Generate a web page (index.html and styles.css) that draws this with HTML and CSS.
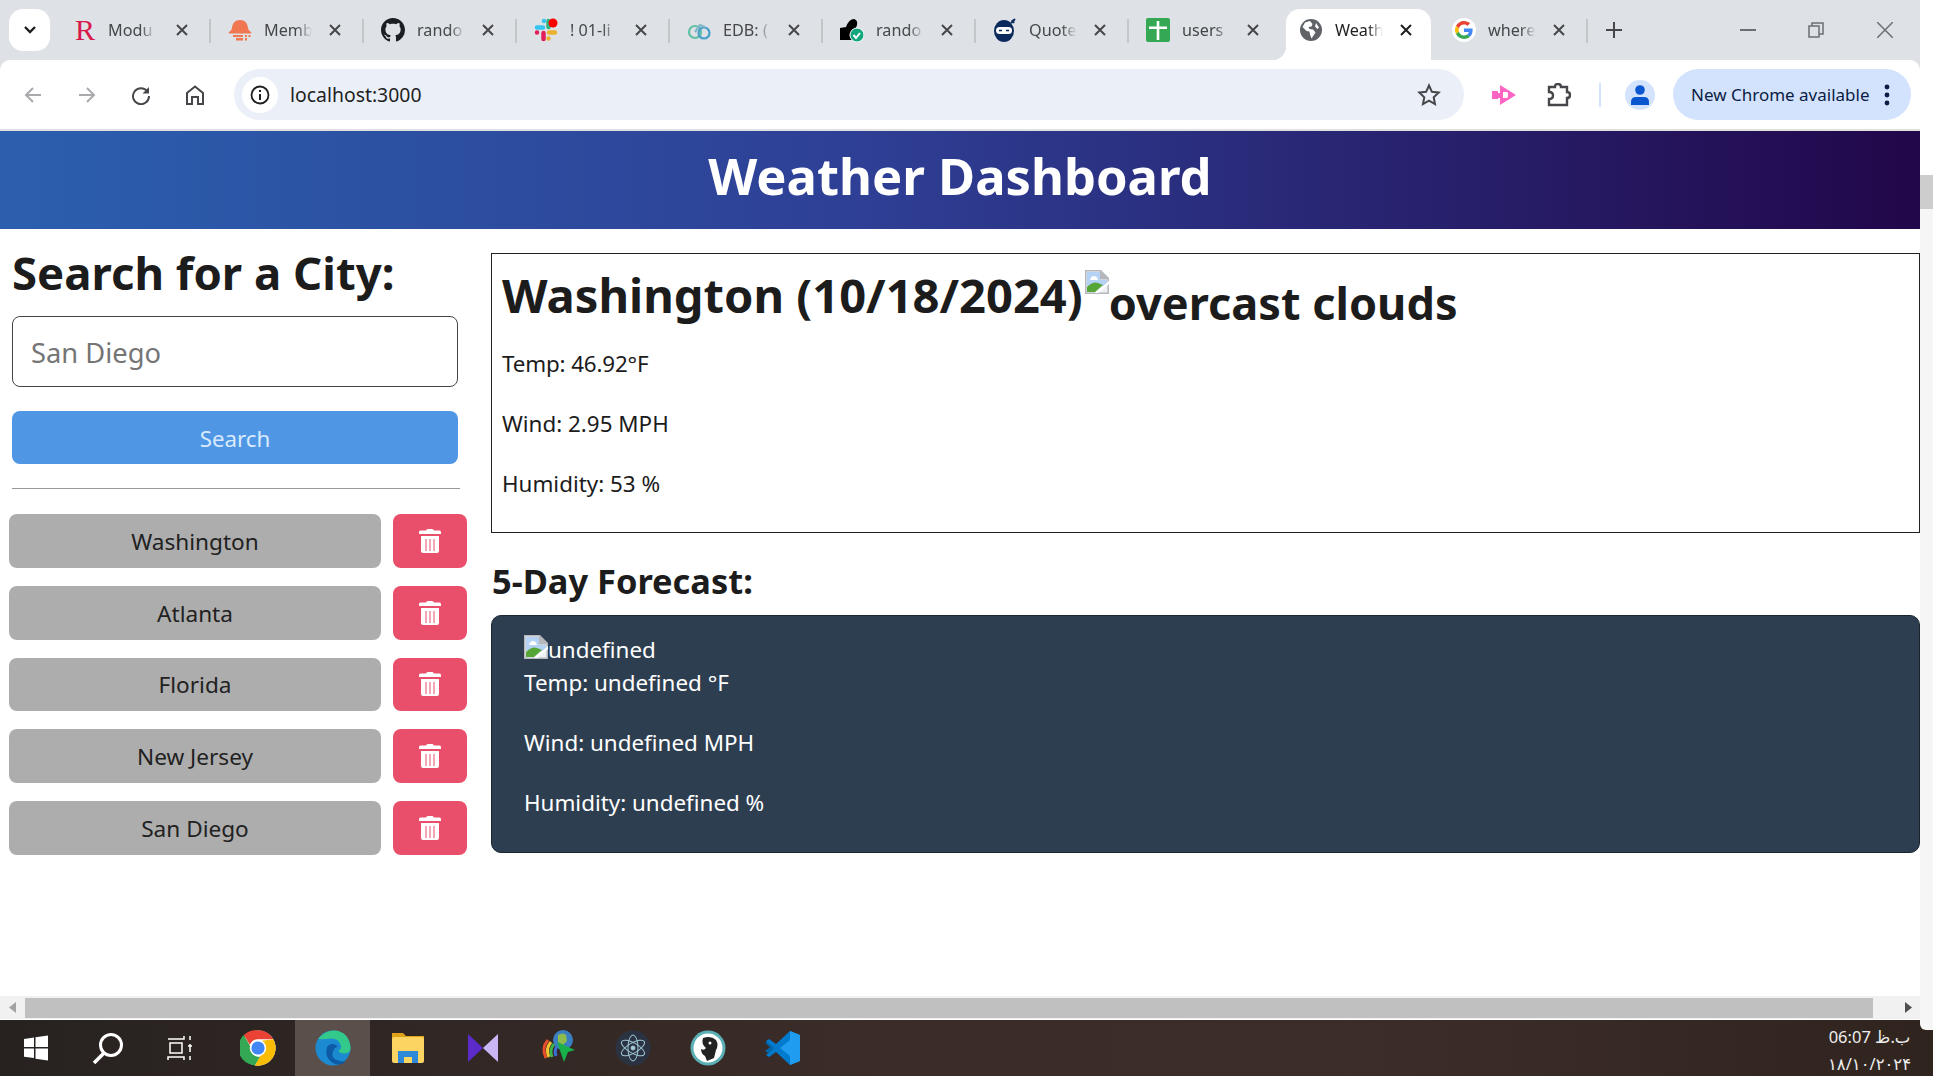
FILE: index.html
```html
<!DOCTYPE html>
<html lang="en">
<head>
  <meta charset="UTF-8">
  <title>Weather Dashboard</title>
  <link rel="stylesheet" href="styles.css">
</head>
<body>

<svg class="sprites" width="0" height="0">
  <symbol id="trash" viewBox="0 0 22 24">
    <path fill="#fff" d="M7 1.5Q7.3 0 9 0h4q1.700 0 2 1.500h5.500q1.500 0 1.500 1.500v2H0V3q0-1.500 1.500-1.500zM2 7h18v15q0 2-2 2H4q-2 0-2-2z"/>
    <path stroke="#e94e6a" stroke-width="1" d="M7 10v12M11 10v12M15 10v12"/>
  </symbol>
  <symbol id="broken" viewBox="0 0 24 24">
    <path fill="#b4b8bd" d="M0 0h16l8 8v16H0z"/>
    <path fill="#eef0f3" d="M1.500 1.500h13.500v8h7.500v13H1.500z"/>
    <path fill="#b5d2f4" d="M2 2h13v8h7v6H2z"/>
    <path fill="#fff" d="M5 10q1-4 4-4t4 4z"/>
    <path fill="#55a636" d="M2 22v-5q6-6 11-4l5 2-8 7z"/>
    <path fill="#fff" d="M10 23l14-12v3L13.500 23z"/>
  </symbol>
  <symbol id="close-x" viewBox="0 0 14 14">
    <path stroke="currentColor" stroke-width="2" d="M2 2l10 10M12 2L2 12"/>
  </symbol>
</svg>

<div class="screen">
  <div class="browser">

    <div class="tabstrip">
      <div class="tab-search">
        <svg width="14" height="10" viewBox="0 0 14 10"><path fill="none" stroke="#1f1f1f" stroke-width="2.400" d="M2 2l5 5 5-5"/></svg>
      </div>

      <div class="tab">
        <span class="fav fav-r">R</span>
        <span class="tab-title">Modu</span>
        <svg class="tab-close"><use href="#close-x"/></svg>
      </div>
      <div class="tab">
        <svg class="fav" viewBox="0 0 24 24"><path fill="#f0774f" d="M12 2c5 0 7.500 3 8 8 .3 2 1.500 3 3 4 .8.600.2 1.500-.8 1.500H1.800c-1 0-1.600-.9-.8-1.500 1.500-1 2.700-2 3-4 .5-5 3-8 8-8z"/><path fill="#f0774f" d="M5 17h10v2H5zM8 20h7v2.500H8zM17 17h2v2h-2zM20.500 17h2v2h-2zM17 20h2v2.500h-2z"/></svg>
        <span class="tab-title">Memb</span>
        <svg class="tab-close"><use href="#close-x"/></svg>
      </div>
      <div class="tab">
        <svg class="fav" viewBox="0 0 16 16"><path fill="#1b1f23" d="M8 0C3.580 0 0 3.580 0 8c0 3.540 2.290 6.530 5.470 7.590.4.070.55-.17.55-.38 0-.19-.01-.82-.01-1.490-2.010.37-2.530-.49-2.690-.94-.09-.23-.48-.94-.82-1.130-.28-.15-.68-.52-.01-.53.63-.01 1.080.58 1.230.82.72 1.210 1.870.87 2.330.66.070-.52.28-.87.51-1.070-1.780-.2-3.640-.89-3.640-3.950 0-.87.31-1.590.82-2.150-.08-.2-.36-1.020.08-2.120 0 0 .67-.21 2.200.82.64-.18 1.320-.27 2-.27.68 0 1.360.09 2 .27 1.530-1.040 2.200-.82 2.200-.82.44 1.100.16 1.920.08 2.120.51.56.82 1.270.82 2.150 0 3.070-1.870 3.750-3.650 3.950.29.25.54.73.54 1.480 0 1.070-.01 1.930-.01 2.200 0 .21.15.46.55.38A8.013 8.013 0 0016 8c0-4.420-3.580-8-8-8z"/></svg>
        <span class="tab-title">rando</span>
        <svg class="tab-close"><use href="#close-x"/></svg>
      </div>
      <div class="tab">
        <svg class="fav" viewBox="0 0 24 24">
          <path stroke="#36c5f0" stroke-width="4.500" stroke-linecap="round" d="M3 9.500h6"/><path stroke="#36c5f0" stroke-width="4.500" stroke-linecap="round" d="M10 3v.1"/>
          <path stroke="#2eb67d" stroke-width="4.500" stroke-linecap="round" d="M14.500 3v6"/>
          <circle cx="19" cy="5" r="4.500" fill="#f00"/>
          <path stroke="#ecb22e" stroke-width="4.500" stroke-linecap="round" d="M15 14.500h6M14.500 20.500v.1"/>
          <path stroke="#e01e5a" stroke-width="4.500" stroke-linecap="round" d="M9.500 15v6M3 14.500v.1"/>
        </svg>
        <span class="tab-title">! 01-li</span>
        <svg class="tab-close"><use href="#close-x"/></svg>
      </div>
      <div class="tab">
        <svg class="fav" viewBox="0 0 24 24" fill="none" stroke-width="2.200"><circle cx="8" cy="14" r="6" stroke="#5fc0a5"/><circle cx="17" cy="15" r="5.500" stroke="#4aa0c8"/><path stroke="#7fb7c9" d="M8 14l5-7 5 2"/></svg>
        <span class="tab-title">EDB: (</span>
        <svg class="tab-close"><use href="#close-x"/></svg>
      </div>
      <div class="tab">
        <svg class="fav" viewBox="0 0 24 24"><path fill="#000" d="M0 10l6-1q3-8 8-8 4 1 3 6l-2 5-3 10H0z"/><circle cx="17" cy="17" r="7" fill="#12a67c" stroke="#fff" stroke-width="1"/><path fill="none" stroke="#fff" stroke-width="2" d="M13.500 17l2.500 3 4-5"/></svg>
        <span class="tab-title">rando</span>
        <svg class="tab-close"><use href="#close-x"/></svg>
      </div>
      <div class="tab">
        <svg class="fav" viewBox="0 0 24 24"><ellipse cx="11" cy="13" rx="10" ry="11" fill="#0d2a5c"/><rect x="3" y="9" width="16" height="7" rx="3.500" fill="#fff"/><path stroke="#0d2a5c" stroke-width="1.500" d="M6 12.500h3M13 12.500h3"/><path stroke="#0d2a5c" stroke-width="2" d="M18 5l4-4M21 5l-2-3"/></svg>
        <span class="tab-title">Quote</span>
        <svg class="tab-close"><use href="#close-x"/></svg>
      </div>
      <div class="tab no-sep">
        <svg class="fav" viewBox="0 0 24 24"><rect width="24" height="24" rx="2" fill="#34a853"/><path fill="#fff" d="M10.700 3h2.600v5.500H21V11h-7.700v11h-2.600V11H3V8.500h7.700z"/></svg>
        <span class="tab-title">users</span>
        <svg class="tab-close"><use href="#close-x"/></svg>
      </div>
      <div class="tab active">
        <svg class="fav" viewBox="0 0 24 24"><circle cx="12" cy="12" r="11" fill="#5f6368"/><path fill="#fff" d="M11 3l-5 1.500L3.500 9l4 4 3 .5.5 3 1.500 4 2-3 2-3-2.500-3-3.500-.5-1-2 3-.5 1-2.500zM17 5l3 4.500-1.500 1.500-2.500-2.500z"/></svg>
        <span class="tab-title">Weath</span>
        <svg class="tab-close"><use href="#close-x"/></svg>
      </div>
      <div class="tab">
        <span class="fav fav-google">
          <svg viewBox="0 0 48 48">
            <path fill="#EA4335" d="M24 9.500c3.540 0 6.710 1.220 9.210 3.600l6.850-6.850C35.900 2.380 30.470 0 24 0 14.620 0 6.510 5.380 2.560 13.220l7.980 6.190C12.430 13.720 17.740 9.500 24 9.500z"/>
            <path fill="#4285F4" d="M46.980 24.550c0-1.570-.15-3.090-.38-4.550H24v9.020h12.940c-.58 2.960-2.260 5.480-4.780 7.180l7.730 6c4.510-4.180 7.090-10.360 7.090-17.650z"/>
            <path fill="#FBBC05" d="M10.530 28.590c-.48-1.450-.76-2.990-.76-4.590s.27-3.140.76-4.590l-7.980-6.190C.92 16.460 0 20.120 0 24c0 3.880.92 7.540 2.560 10.780l7.970-6.190z"/>
            <path fill="#34A853" d="M24 48c6.480 0 11.930-2.130 15.890-5.810l-7.730-6c-2.150 1.450-4.920 2.300-8.160 2.300-6.260 0-11.570-4.220-13.470-9.910l-7.980 6.190C6.510 42.620 14.620 48 24 48z"/>
          </svg>
        </span>
        <span class="tab-title">where</span>
        <svg class="tab-close"><use href="#close-x"/></svg>
      </div>

      <div class="new-tab">
        <svg width="16" height="16" viewBox="0 0 16 16"><path stroke="#45474a" stroke-width="2" d="M8 0v16M0 8h16"/></svg>
      </div>

      <div class="win-controls">
        <div class="win-btn"><svg width="16" height="2" viewBox="0 0 16 2"><path stroke="#6b6e72" stroke-width="2" d="M0 1h16"/></svg></div>
        <div class="win-btn"><svg width="16" height="16" viewBox="0 0 16 16" fill="none" stroke="#6b6e72" stroke-width="1.500"><rect x="1" y="4" width="10" height="11"/><path d="M4 4V1h11v11h-4"/></svg></div>
        <div class="win-btn"><svg width="16" height="16" viewBox="0 0 16 16"><path stroke="#6b6e72" stroke-width="1.500" d="M0 0l16 16M16 0L0 16"/></svg></div>
      </div>
    </div>

    <div class="toolbar">
      <div class="tool-btn"><svg width="18" height="18" viewBox="0 0 18 18" fill="none" stroke="#a8aaad" stroke-width="2"><path d="M17 9H2M9 2L2 9l7 7"/></svg></div>
      <div class="tool-btn"><svg width="18" height="18" viewBox="0 0 18 18" fill="none" stroke="#a8aaad" stroke-width="2"><path d="M1 9h15M9 2l7 7-7 7"/></svg></div>
      <div class="tool-btn"><svg width="20" height="20" viewBox="0 0 20 20" fill="none" stroke="#45474a" stroke-width="2"><path d="M16.500 6.500A8 8 0 1 0 18 11"/><path fill="#45474a" stroke="none" d="M18 2v6.500h-6.500z"/></svg></div>
      <div class="tool-btn"><svg width="20" height="20" viewBox="0 0 20 20" fill="none" stroke="#45474a" stroke-width="2"><path d="M2 19V8l8-6.500L18 8v11h-5v-7H7v7z"/></svg></div>

      <div class="omnibox">
        <span class="site-info">
          <svg width="20" height="20" viewBox="0 0 20 20"><circle cx="10" cy="10" r="8.500" fill="none" stroke="#1f1f1f" stroke-width="1.800"/><path stroke="#1f1f1f" stroke-width="2" d="M10 9v6M10 5v2"/></svg>
        </span>
        <span class="url">localhost:3000</span>
        <svg class="star" width="24" height="24" viewBox="0 0 24 24"><path fill="none" stroke="#45474a" stroke-width="2" d="M12 2.500l2.900 6.300 6.800.8-5 4.700 1.300 6.800-6-3.400-6 3.400 1.300-6.800-5-4.700 6.800-.8z"/></svg>
      </div>

      <div class="tool-btn ext-btn"><svg width="24" height="20" viewBox="0 0 24 20"><path fill="#ff66c4" d="M0 6h6V8H8V0l16 10L8 20v-7H6v1H0zM11 7v6h4l1-1v-4l-1-1z"/></svg></div>
      <div class="tool-btn ext-btn"><svg width="24" height="24" viewBox="0 0 24 24"><path fill="none" stroke="#45474a" stroke-width="2.400" d="M2 4h6q0-3 3-3t3 3h6v5q3 0 3 3t-3 3v7H2v-6q4 0 4-3.500T2 9z"/></svg></div>
      <div class="tool-sep"></div>
      <div class="avatar"><svg width="20" height="20" viewBox="0 0 20 20"><circle cx="10" cy="5" r="4.800" fill="#0b57d0"/><path fill="#0b57d0" d="M1 20v-3q0-5 5-5h8q5 0 5 5v3z"/></svg></div>
      <div class="update-pill">
        <span>New Chrome available</span>
        <svg width="6" height="22" viewBox="0 0 6 22"><circle cx="3" cy="3" r="2.400" fill="#0b1d44"/><circle cx="3" cy="11" r="2.400" fill="#0b1d44"/><circle cx="3" cy="19" r="2.400" fill="#0b1d44"/></svg>
      </div>
    </div>

    <div class="page">
      <header class="site-header">
        <h1>Weather Dashboard</h1>
      </header>

      <div class="content">
        <aside class="sidebar">
          <h2>Search for a City:</h2>
          <input class="city-input" type="text" placeholder="San Diego">
          <button class="search-btn">Search</button>
          <hr>
          <div class="history">
            <div class="history-row">
              <button class="city-btn">Washington</button>
              <button class="delete-btn"><svg width="22" height="24"><use href="#trash"/></svg></button>
            </div>
            <div class="history-row">
              <button class="city-btn">Atlanta</button>
              <button class="delete-btn"><svg width="22" height="24"><use href="#trash"/></svg></button>
            </div>
            <div class="history-row">
              <button class="city-btn">Florida</button>
              <button class="delete-btn"><svg width="22" height="24"><use href="#trash"/></svg></button>
            </div>
            <div class="history-row">
              <button class="city-btn">New Jersey</button>
              <button class="delete-btn"><svg width="22" height="24"><use href="#trash"/></svg></button>
            </div>
            <div class="history-row">
              <button class="city-btn">San Diego</button>
              <button class="delete-btn"><svg width="22" height="24"><use href="#trash"/></svg></button>
            </div>
          </div>
        </aside>

        <main class="results">
          <section class="today">
            <h2><span>Washington (10/18/2024)</span><svg class="broken-big" width="24" height="24"><use href="#broken"/></svg><span class="alt-big">overcast clouds</span></h2>
            <p>Temp: 46.92°F</p>
            <p>Wind: 2.95 MPH</p>
            <p>Humidity: 53 %</p>
          </section>

          <h3>5-Day Forecast:</h3>
          <section class="forecast">
            <div class="forecast-icon"><svg width="24" height="24"><use href="#broken"/></svg><span>undefined</span></div>
            <p>Temp: undefined °F</p>
            <p>Wind: undefined MPH</p>
            <p>Humidity: undefined %</p>
          </section>
        </main>
      </div>
    </div>

    <div class="hscroll">
      <div class="hscroll-btn left"><svg width="7" height="11" viewBox="0 0 7 11"><path fill="#a3a3a3" d="M7 0v11L0 5.500z"/></svg></div>
      <div class="hscroll-thumb"></div>
      <div class="hscroll-btn right"><svg width="7" height="11" viewBox="0 0 7 11"><path fill="#505050" d="M0 0v11l7-5.500z"/></svg></div>
    </div>
  </div>

  <div class="side-strip">
    <div class="side-top"></div>
    <div class="side-thumb"></div>
    <div class="side-track"></div>
  </div>
</div>

<footer class="taskbar">
  <div class="task-item sys">
    <svg width="26" height="26" viewBox="0 0 26 26"><path fill="#fff" d="M1 4l10-1.500V12H1zM12.500 2.300L25 .5V12H12.500zM1 13.500h10V23L1 21.700zM12.500 13.500H25V25.500l-12.500-1.800z"/></svg>
  </div>
  <div class="task-item sys">
    <svg width="34" height="34" viewBox="0 0 34 34" fill="none" stroke="#fff"><circle cx="20" cy="14" r="10.500" stroke-width="3"/><path stroke-width="3.500" d="M13 22L3 32"/></svg>
  </div>
  <div class="task-item sys last-sys">
    <svg width="26" height="26" viewBox="0 0 26 26" fill="none" stroke="#fff" stroke-width="1.500"><path d="M1 4h16V1M1 25v-3h16v3M3 8h12v10H3zM23 1v4M23 9v8M23 21v4M21 11h4"/></svg>
  </div>
  <div class="task-item">
    <svg width="36" height="36" viewBox="0 0 48 48">
      <circle cx="24" cy="24" r="23.500" fill="#fff"/>
      <path fill="#ea4335" d="M24 .5a23.500 23.500 0 0 1 20.400 11.800H24a11.800 11.800 0 0 0-10.900 7.200L5 6.700A23.500 23.500 0 0 1 24 .5z"/>
      <path fill="#34a853" d="M5 6.700l10.200 17.700a10 10 0 0 0 12.100 11L20 47.200A23.500 23.500 0 0 1 5 6.700z" />
      <path fill="#fbbc04" d="M44.400 12.300A23.500 23.500 0 0 1 20 47.200l10-17.400a11 11 0 0 0-1-15.500z"/>
      <circle cx="24" cy="24" r="11" fill="#fff"/>
      <circle cx="24" cy="24" r="8.800" fill="#4285f4"/>
    </svg>
  </div>
  <div class="task-item current">
    <svg width="36" height="36" viewBox="0 0 36 36">
      <circle cx="18" cy="18" r="17.500" fill="#1b8ad0"/>
      <path fill="#32c98a" d="M3 9q7-9 17-8.500 14 1.500 15.500 17 .5 5-5 6-6 .5-7-3 3-1 2.500-5-2-7-10-7-7 1-12.500 0.500z"/>
      <path fill="#0d5aa7" d="M12 17q-3 12 8 17 6 2 11-3-3 1-8-.5-8-3-5-9 1-4 5-5-7-5-11 .5z"/>
    </svg>
  </div>
  <div class="task-item">
    <svg width="36" height="36" viewBox="0 0 36 36">
      <path fill="#e0a21a" d="M2 3h11l3 3h18v6H2z"/>
      <rect x="2" y="7" width="32" height="26" rx="2" fill="#fcd462"/>
      <path fill="#2e8ad8" d="M8 33V21h20v12h-6v-6h-8v6z"/>
    </svg>
  </div>
  <div class="task-item">
    <svg width="34" height="34" viewBox="0 0 34 34">
      <path fill="#5c2bc9" d="M2 3l15 14L2 31z"/>
      <path fill="#c8b6f5" d="M32 3v28L17 17z"/>
    </svg>
  </div>
  <div class="task-item">
    <svg width="38" height="38" viewBox="0 0 38 38">
      <path fill="none" stroke="#e84d2c" stroke-width="3" d="M9 11q-7 8-2 18"/>
      <path fill="none" stroke="#f4c430" stroke-width="3" d="M12 13q-6 7-2 15"/>
      <path fill="none" stroke="#3eb34b" stroke-width="3" d="M15 15q-5 6-2 13"/>
      <path fill="none" stroke="#3a6fd8" stroke-width="3" d="M18 17q-3 5-1 10"/>
      <circle cx="24" cy="11" r="10" fill="#3a7fc2"/>
      <path fill="#8dbb4c" d="M19 6q5-3 8 0l1 6-4 4-5-3z"/>
      <path fill="#18b04a" d="M18 13l18 8-7 2-4 10z"/>
    </svg>
  </div>
  <div class="task-item">
    <svg width="36" height="36" viewBox="0 0 36 36" fill="none" stroke="#9fc9d8" stroke-width="1">
      <circle cx="18" cy="18" r="17.500" fill="#2b3342" stroke="none"/>
      <ellipse cx="18" cy="18" rx="13" ry="5" transform="rotate(30 18 18)"/>
      <ellipse cx="18" cy="18" rx="13" ry="5" transform="rotate(90 18 18)"/>
      <ellipse cx="18" cy="18" rx="13" ry="5" transform="rotate(150 18 18)"/>
      <circle cx="18" cy="18" r="2" fill="#9fc9d8"/>
    </svg>
  </div>
  <div class="task-item">
    <svg width="36" height="36" viewBox="0 0 36 36">
      <circle cx="18" cy="18" r="17.500" fill="#5ab0b5"/>
      <circle cx="18" cy="18" r="14.500" fill="#fff"/>
      <path fill="#222" d="M13 8q8-3 13 2 3 5 0 10l-2 8-7 3-2-5q-4-2-4-7 3 2 5-1-5-4-3-10z"/>
      <circle cx="20" cy="13" r="1.500" fill="#fff"/>
    </svg>
  </div>
  <div class="task-item">
    <svg width="36" height="36" viewBox="0 0 36 36">
      <path fill="#0065a9" d="M0 13l3-2 8 6-8 6-3-2 5-4z"/>
      <path fill="#007acc" d="M25 1L11 14 4 9 1 11l8 7-8 7 3 2 7-5 14 13 10-4V5z"/>
      <path fill="#1f9cf0" d="M25 1l10 4v26l-10 4zM25 10l-10 8 10 8z"/>
    </svg>
  </div>

  <div class="clock">
    <div class="clock-time" dir="rtl">ب.ظ 06:07</div>
    <div class="clock-date">۱۸/۱۰/۲۰۲۴</div>
  </div>
</footer>

</body>
</html>
```

FILE: styles.css
```css
* {
  box-sizing: border-box;
}

html,
body {
  height: 100%;
}

body {
  margin: 0;
  display: flex;
  flex-direction: column;
  overflow: hidden;
  background: #fff;
  color: #1c1c1c;
  font-family: "Noto Sans", Arial, sans-serif;
}

.sprites {
  position: absolute;
}

.screen {
  display: flex;
  height: 1020px;
}

.browser {
  width: 1920px;
  display: flex;
  flex-direction: column;
  background: #dee1e6;
}

.side-strip {
  width: 13px;
  display: flex;
  flex-direction: column;
  position: relative;
  z-index: 1;
  margin-bottom: -10px;
}

.side-top {
  height: 175px;
  background: #fff;
}

.side-thumb {
  height: 34px;
  background: #cdcdcd;
}

.side-track {
  flex: 1;
  background: #f6f6f6;
  border-bottom-left-radius: 6px;
}

/* tabs */
.tabstrip {
  height: 60px;
  display: flex;
  align-items: flex-end;
}

.tab-search {
  width: 41px;
  height: 42px;
  margin: 0 8px 9px 9px;
  background: #fff;
  border-radius: 14px;
  display: flex;
  align-items: center;
  justify-content: center;
}

.tab {
  position: relative;
  width: 153px;
  height: 51px;
  padding: 0 22px 9px 17px;
  display: flex;
  align-items: center;
  flex-shrink: 0;
  color: #45474a;
}

.tab::after {
  content: "";
  position: absolute;
  right: 0;
  top: 10px;
  width: 2px;
  height: 24px;
  background: #c4c7c9;
}

.tab.no-sep::after,
.tab.active::after {
  display: none;
}

.tab.active {
  width: 145px;
  margin: 0 4px;
  padding-left: 13px;
  padding-right: 18px;
  background: #fff;
  border-radius: 14px 14px 0 0;
  color: #1f1f1f;
}

.tab.active::before {
  content: "";
  position: absolute;
  left: -14px;
  bottom: 0;
  width: 14px;
  height: 14px;
  background: radial-gradient(circle at 0 0, transparent 14px, #fff 14.5px);
}

.fav {
  width: 24px;
  height: 24px;
  flex-shrink: 0;
}

.fav-r {
  width: 21px;
  font-family: "Liberation Serif", serif;
  font-size: 30px;
  line-height: 24px;
  color: #d7194b;
}

.fav-google {
  background: #fff;
  border-radius: 50%;
  padding: 3px;
  display: flex;
}

.tab-title {
  width: 48px;
  margin-left: 12px;
  white-space: nowrap;
  font-size: 16.2px;
  -webkit-mask-image: linear-gradient(to right, #000 68%, transparent);
  mask-image: linear-gradient(to right, #000 68%, transparent);
}

.tab-close {
  width: 14px;
  height: 14px;
  margin-left: auto;
  flex-shrink: 0;
}

.new-tab {
  width: 52px;
  height: 51px;
  padding-bottom: 9px;
  display: flex;
  align-items: center;
  justify-content: center;
}

.win-controls {
  margin-left: auto;
  display: flex;
  align-self: flex-start;
}

.win-btn {
  width: 68px;
  height: 60px;
  display: flex;
  align-items: center;
  justify-content: center;
}

.win-btn:last-child {
  width: 70px;
}

/* toolbar */
.toolbar {
  height: 69px;
  padding: 0 9px 0 6px;
  display: flex;
  align-items: center;
  background: #fff;
  border-radius: 10px 10px 0 0;
}

.tool-btn {
  width: 54px;
  display: flex;
  align-items: center;
  justify-content: center;
  flex-shrink: 0;
}

.omnibox {
  flex: 1;
  height: 51px;
  margin: 0 12px 0 12px;
  padding: 0 23px 0 8px;
  display: flex;
  align-items: center;
  background: #ebf0f8;
  border-radius: 26px;
}

.site-info {
  width: 36px;
  height: 36px;
  border-radius: 50%;
  background: #fff;
  display: flex;
  align-items: center;
  justify-content: center;
}

.url {
  margin-left: 12px;
  flex: 1;
  font-size: 19.4px;
  color: #1f1f1f;
}

.ext-btn {
  width: 55px;
}

.tool-sep {
  width: 2px;
  height: 24px;
  margin-left: 13px;
  background: #d3e3fd;
}

.avatar {
  width: 30px;
  height: 30px;
  margin-left: 24px;
  border-radius: 50%;
  background: #d3e3fd;
  display: flex;
  align-items: center;
  justify-content: center;
}

.update-pill {
  width: 238px;
  height: 51px;
  margin-left: 18px;
  padding: 0 21px 0 18px;
  display: flex;
  align-items: center;
  justify-content: space-between;
  background: #d3e3fd;
  border-radius: 26px;
  color: #0b1d44;
  font-size: 17px;
}

/* page */
.page {
  flex: 1;
  border-top: 2px solid #e0e0e0;
  background: #fff;
  overflow: hidden;
}

.site-header {
  height: 98px;
  padding-bottom: 9px;
  display: flex;
  align-items: center;
  justify-content: center;
  background: linear-gradient(to right, #2b5fae, #2e3f95 45%, #22074a);
}

.site-header h1 {
  margin: 0;
  color: #fff;
  font-size: 50.7px;
  font-weight: 700;
}

.content {
  display: flex;
}

.sidebar {
  width: 491px;
  padding: 0 33px 0 12px;
  flex-shrink: 0;
}

.sidebar h2 {
  margin: 18px 0 19px;
  font-size: 45.5px;
  line-height: 50px;
  font-weight: 700;
}

.city-input {
  width: 100%;
  height: 71px;
  display: block;
  padding: 2px 18px 0;
  border: 1px solid #444;
  border-radius: 8px;
  background: #fff;
  font-family: inherit;
  font-size: 27.3px;
}

.city-input::placeholder {
  color: #757575;
}

.search-btn {
  width: 100%;
  height: 53px;
  display: block;
  margin-top: 24px;
  padding: 2px 0 0;
  border: none;
  border-radius: 8px;
  background: #4f97e5;
  color: #d9eafc;
  font-family: inherit;
  font-size: 22.3px;
}

.sidebar hr {
  margin: 24px -2px 25px 0;
  border: none;
  border-top: 1px solid #999;
}

.history {
  margin-left: -3px;
  width: 458px;
  display: flex;
  flex-direction: column;
  gap: 18px;
}

.history-row {
  height: 53.75px;
  display: flex;
  gap: 12px;
}

.city-btn {
  flex: 1;
  padding: 1px 0 0;
  border: none;
  border-radius: 8px;
  background: #adadad;
  color: #212121;
  font-family: inherit;
  font-size: 22.6px;
}

.delete-btn {
  width: 74px;
  border: none;
  border-radius: 8px;
  background: #e94e6a;
  display: flex;
  align-items: center;
  justify-content: center;
  padding: 0;
}

.results {
  flex: 1;
  padding-top: 24px;
}

.today {
  height: 280px;
  padding: 11px 10px 10px;
  border: 1px solid #222;
}

.today h2 {
  margin: 0 0 22.5px;
  font-size: 47.1px;
  line-height: 60px;
  font-weight: 700;
  white-space: nowrap;
}

.broken-big {
  vertical-align: 19px;
  margin-left: 2px;
}

.alt-big {
  position: relative;
  top: 7px;
  font-size: 45.1px;
}

.today p,
.forecast p {
  margin: 0 0 30px;
  font-size: 22.4px;
  line-height: 30px;
}

.today p:first-of-type {
  letter-spacing: -0.15px;
}

.results h3 {
  margin: 26px 0 12px 1px;
  font-size: 34.4px;
  line-height: 44px;
  font-weight: 700;
}

.forecast {
  height: 238px;
  padding: 19px 32px 4px;
  border: 1px solid #1a2530;
  border-radius: 10px;
  background: #2d3e50;
  color: #fff;
}

.forecast-icon {
  height: 33px;
  display: flex;
  align-items: flex-start;
  font-size: 22.4px;
  line-height: 30px;
}

/* scrollbar */
.hscroll {
  height: 24px;
  padding-bottom: 1px;
  display: flex;
  background: #f1f1f1;
  border-bottom: 1px solid #fff;
}

.hscroll-btn {
  display: flex;
  align-items: center;
}

.hscroll-btn.left {
  width: 25px;
  padding-left: 9px;
}

.hscroll-btn.right {
  width: 47px;
  padding-left: 32px;
}

.hscroll-thumb {
  flex: 1;
  margin-top: 2px;
  background: #c0c0c0;
}

/* windows taskbar */
.taskbar {
  height: 56px;
  display: flex;
  align-items: center;
  background: linear-gradient(to right, #272220, #3b2c28 45%, #3d2d2a 70%, #30241f);
}

.task-item {
  width: 75px;
  height: 56px;
  display: flex;
  align-items: center;
  justify-content: center;
}

.task-item.sys {
  width: 72px;
}

.task-item.last-sys {
  margin-right: 4px;
}

.task-item.current {
  background: #5a4f4a;
}

.clock {
  margin-left: auto;
  width: 85px;
  margin-right: 21px;
  padding-top: 3px;
  color: #eee;
  font-family: "Noto Sans", "DejaVu Sans", sans-serif;
  font-size: 16.5px;
  line-height: 27px;
  text-align: center;
}

.clock-time {
  white-space: nowrap;
}

.clock-date {
  white-space: nowrap;
}
```
